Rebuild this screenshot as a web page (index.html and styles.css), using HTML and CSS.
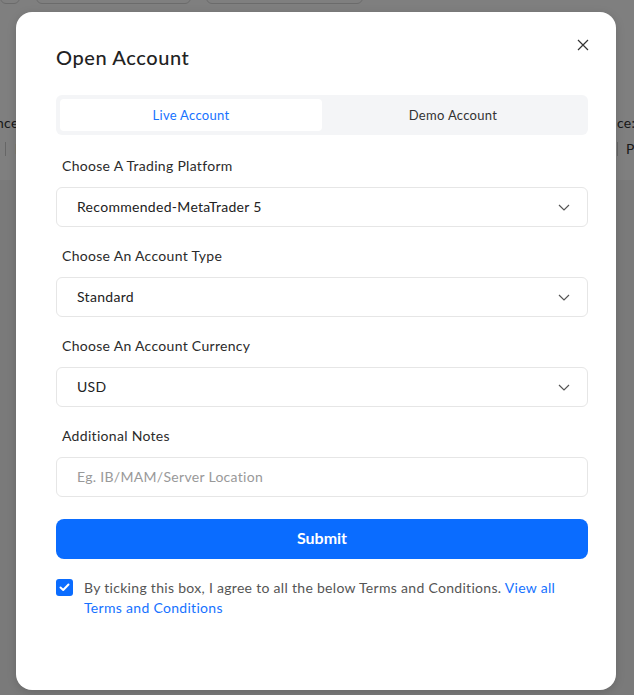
FILE: index.html
```html
<!DOCTYPE html>
<html lang="en">
<head>
<meta charset="utf-8">
<title>Open Account</title>
<link rel="stylesheet" href="styles.css">
</head>
<body>
<div class="backdrop">
  <div class="bg-top">
    <div class="bg-cards">
      <div class="bg-card c1"></div>
      <div class="bg-card c2"></div>
      <div class="bg-card c3"></div>
    </div>
    <span class="bg-text t1">nce</span>
    <span class="bg-text t2">ce:</span>
    <span class="bg-bar b1"></span>
    <span class="bg-text t3">I</span>
    <span class="bg-bar b2"></span>
    <span class="bg-text t4">P</span>
  </div>
</div>
<div class="overlay">
  <div class="modal">
    <button class="close" aria-label="Close">
      <svg width="12" height="12" viewBox="0 0 12 12"><path d="M1 1 L11 11 M11 1 L1 11" stroke="#333" stroke-width="1.2" fill="none"/></svg>
    </button>
    <h2 class="title">Open Account</h2>
    <div class="tabs">
      <div class="tab active">Live Account</div>
      <div class="tab">Demo Account</div>
    </div>
    <div class="field first">
      <label class="label">Choose A Trading Platform</label>
      <div class="select"><span>Recommended-MetaTrader 5</span><svg class="chev" width="12" height="7" viewBox="0 0 12 7"><path d="M1 1 L6 6 L11 1" stroke="#555" stroke-width="1.2" fill="none"/></svg></div>
    </div>
    <div class="field">
      <label class="label">Choose An Account Type</label>
      <div class="select"><span>Standard</span><svg class="chev" width="12" height="7" viewBox="0 0 12 7"><path d="M1 1 L6 6 L11 1" stroke="#555" stroke-width="1.2" fill="none"/></svg></div>
    </div>
    <div class="field">
      <label class="label">Choose An Account Currency</label>
      <div class="select"><span>USD</span><svg class="chev" width="12" height="7" viewBox="0 0 12 7"><path d="M1 1 L6 6 L11 1" stroke="#555" stroke-width="1.2" fill="none"/></svg></div>
    </div>
    <div class="field">
      <label class="label">Additional Notes</label>
      <div class="input"><span class="placeholder">Eg. IB/MAM/Server Location</span></div>
    </div>
    <button class="submit">Submit</button>
    <div class="agree">
      <span class="checkbox"><svg width="11" height="9" viewBox="0 0 11 9"><path d="M1.5 4.5 L4.2 7 L9.5 1.5" stroke="#fff" stroke-width="2" fill="none" stroke-linecap="round" stroke-linejoin="round"/></svg></span>
      <p class="agree-text">By ticking this box, I agree to all the below Terms and Conditions. <a href="#" class="link">View all Terms and Conditions</a></p>
    </div>
  </div>
</div>
</body>
</html>
```

FILE: styles.css
```css
* { box-sizing: border-box; }
html, body { margin: 0; padding: 0; }
body {
  width: 634px;
  height: 695px;
  overflow: hidden;
  font-family: Lato, "Open Sans", sans-serif;
  letter-spacing: 0.3px;
  background: #f4f4f4;
  position: relative;
}
.backdrop {
  position: absolute;
  inset: 0;
}
.bg-top {
  position: relative;
  display: flow-root;
  height: 180px;
  background: #fff;
}
.bg-cards {
  display: flex;
  gap: 15px;
  margin-top: -40px;
}
.bg-card {
  height: 44px;
  border: 1px solid #d6d6d6;
  border-radius: 6px;
  background: #fff;
}
.c1 { width: 20px; }
.c2 { width: 155px; margin-left: 1px; }
.c3 { width: 157px; }
.bg-text {
  position: absolute;
  font-size: 14px;
  color: #333;
}
.t1 { left: -4px; top: 114px; }
.t2 { left: 617px; top: 114px; }
.t3 { left: 15px; top: 140px; color: #5a3a1a; }
.t4 { left: 626px; top: 140px; color: #333; }
.bg-bar {
  position: absolute;
  width: 1px;
  height: 14px;
  background: #ccc;
  top: 142px;
}
.b1 { left: 5px; }
.b2 { left: 617px; }

.overlay {
  position: absolute;
  inset: 0;
  background: rgba(0, 0, 0, 0.5);
  display: flex;
  justify-content: center;
  align-items: flex-start;
  padding-top: 12px;
}
.modal {
  position: relative;
  width: 600px;
  height: 678px;
  margin-left: -2px;
  background: #fff;
  border-radius: 16px;
  padding: 32px 28px 0 40px;
  box-shadow: 0 2px 10px rgba(0,0,0,0.15);
}
.close {
  position: absolute;
  top: 27px;
  right: 27px;
  width: 12px;
  height: 12px;
  padding: 0;
  border: 0;
  background: none;
  display: flex;
}
.title {
  margin: 0;
  font-size: 20px;
  line-height: 26px;
  font-weight: 500;
  letter-spacing: 0.6px;
  color: #222;
}
.tabs {
  margin-top: 25px;
  width: 532px;
  height: 40px;
  background: #f4f5f7;
  border-radius: 6px;
  padding: 4px;
  display: flex;
}
.tab {
  flex: 1;
  display: flex;
  align-items: center;
  justify-content: center;
  font-size: 13px;
  color: #333;
  border-radius: 4px;
}
.tab.active {
  background: #fff;
  color: #1672ff;
}
.field {
  width: 532px;
  margin-top: 19px;
}
.field.first { margin-top: 21px; }
.label {
  display: block;
  padding-left: 6px;
  font-size: 14px;
  line-height: 20px;
  color: #2b2b2b;
  margin-bottom: 11px;
}
.select, .input {
  height: 40px;
  border: 1px solid #e6e6e6;
  border-radius: 6px;
  display: flex;
  align-items: center;
  justify-content: space-between;
  padding: 0 17px 1px 20px;
  font-size: 14px;
  color: #222;
}
.chev { display: block; margin-top: 1px; }
.placeholder { color: #999; }
.submit {
  margin-top: 22px;
  width: 532px;
  height: 40px;
  border: 0;
  border-radius: 8px;
  background: #0a6cff;
  color: #fff;
  font-family: inherit;
  font-size: 16px;
  font-weight: 700;
  letter-spacing: 0;
  padding: 0 0 3px;
  display: block;
}
.agree {
  margin-top: 20px;
  width: 532px;
  display: flex;
  align-items: flex-start;
  gap: 11px;
}
.checkbox {
  flex: none;
  width: 17px;
  height: 17px;
  border-radius: 3px;
  background: #0a6cff;
  display: flex;
  align-items: center;
  justify-content: center;
}
.agree-text {
  margin: 0;
  margin-top: -1px;
  font-size: 14px;
  line-height: 20px;
  color: #555;
}
.link {
  color: #1672ff;
  text-decoration: none;
}
```
